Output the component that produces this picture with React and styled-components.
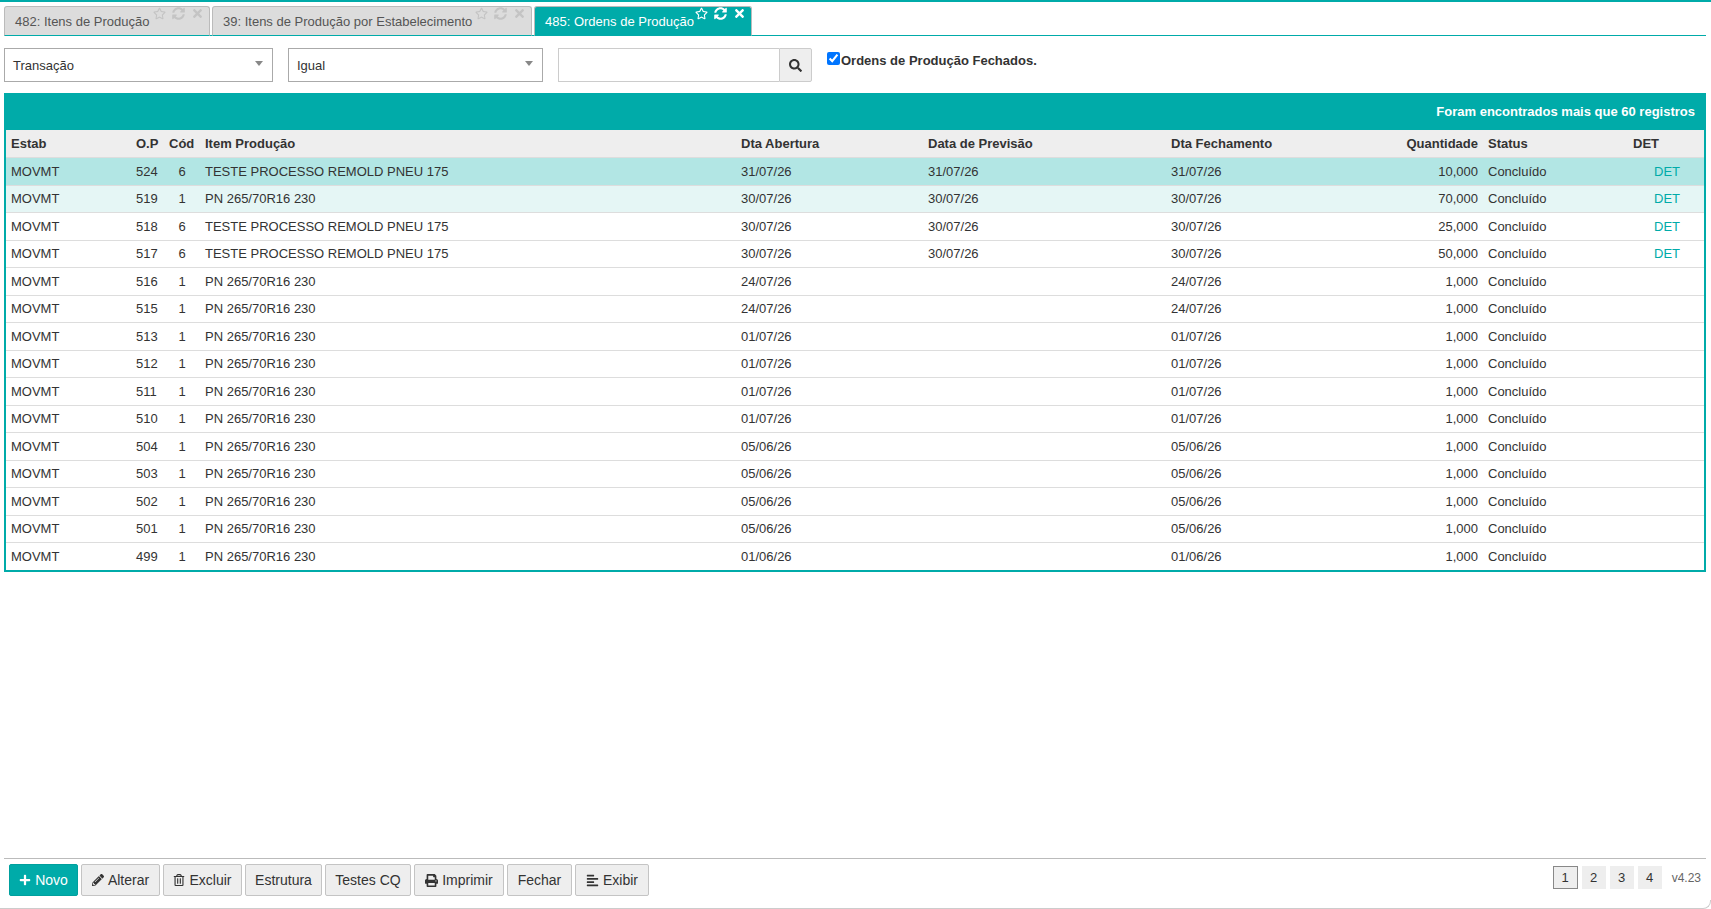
import React from "react"
import styled, { createGlobalStyle } from "styled-components"
import {
  FaRegStar,
  FaSyncAlt,
  FaTimes,
  FaSearch,
  FaPlus,
  FaPencilAlt,
  FaRegTrashAlt,
  FaPrint,
  FaAlignLeft,
} from "react-icons/fa"

const TEAL = "#00aba9"

const GlobalStyle = createGlobalStyle`
  html, body {
    margin: 0;
    padding: 0;
    background: #fff;
  }
  body {
    font-family: "Liberation Sans", Arial, sans-serif;
    font-size: 13px;
    color: #333;
  }
`

const Page = styled.div`
  position: relative;
  display: flex;
  flex-direction: column;
  height: 909px;
  box-sizing: border-box;
  border-top: 2px solid ${TEAL};
  overflow: hidden;

  /* small highlight sitting on the top bar */
  &::before {
    content: "";
    position: absolute;
    top: -2px;
    left: 1675px;
    width: 20px;
    height: 2px;
    background: linear-gradient(90deg, transparent, #fff 50%, transparent);
  }
`

const TabBar = styled.div`
  display: flex;
  align-items: flex-end;
  gap: 2px;
  height: 34px;
  margin: 0 5px 0 4px;
  padding-top: 3px;
  box-sizing: border-box;
  border-bottom: 1px solid ${TEAL};
`

const Tab = styled.div`
  position: relative;
  display: flex;
  align-items: center;
  box-sizing: border-box;
  width: ${(p) => p.$width}px;
  height: 30px;
  margin-bottom: -1px;
  padding: 0 0 0 10px;
  background: ${(p) => (p.$active ? TEAL : "#dcdcdc")};
  color: ${(p) => (p.$active ? "#fff" : "#555")};
  border: 1px solid #bbb;
  border-bottom-color: ${TEAL};
  border-radius: 3px 3px 0 0;
  font-size: 13px;
`

const TabIcons = styled.div`
  position: absolute;
  top: 0;
  right: 5px;
  display: flex;
  align-items: center;
  gap: 6px;
  font-size: 13px;
  color: ${(p) => (p.$active ? "#fff" : "#c4c4c4")};
`

const Filters = styled.div`
  display: flex;
  align-items: flex-start;
  height: 45px;
  padding: 12px 0 0 4px;
`

const SelectBox = styled.div`
  position: relative;
  display: flex;
  align-items: center;
  box-sizing: border-box;
  width: ${(p) => p.$width}px;
  height: 34px;
  margin-right: 15px;
  padding-left: 8px;
  background: #fff;
  border: 1px solid #aaa;
  font-size: 13px;

  &::after {
    content: "";
    position: absolute;
    right: 9px;
    top: 12px;
    border-left: 4px solid transparent;
    border-right: 4px solid transparent;
    border-top: 5px solid #888;
  }
`

const SearchInput = styled.input`
  box-sizing: border-box;
  width: 221px;
  height: 34px;
  padding: 0 6px;
  border: 1px solid #ccc;
  border-right: none;
  outline: none;
`

const SearchButton = styled.button`
  display: flex;
  align-items: center;
  justify-content: center;
  box-sizing: border-box;
  width: 33px;
  height: 34px;
  padding: 0;
  background: #eee;
  border: 1px solid #ccc;
  border-radius: 0 2px 2px 0;
  color: #333;
  font-size: 13px;
`

const CheckLabel = styled.label`
  display: flex;
  align-items: center;
  height: 14px;
  margin: 5px 0 0 15px;
  font-size: 13px;
  font-weight: bold;
  color: #333;
`

const CheckInput = styled.input`
  width: 13px;
  height: 13px;
  margin: -3px 1px 0 0;
  accent-color: #0075ff;
`

const Panel = styled.div`
  margin: 0 5px 0 4px;
  border: 2px solid ${TEAL};
  border-top: none;
`

const PanelHead = styled.div`
  display: flex;
  align-items: center;
  justify-content: flex-end;
  height: 37px;
  margin: 0 -2px;
  padding-right: 11px;
  background: ${TEAL};
  color: #fff;
  font-size: 13px;
  font-weight: bold;
`

const Table = styled.table`
  width: 100%;
  border-collapse: collapse;
  table-layout: fixed;
`

const HeadCell = styled.th`
  height: 27px;
  padding: 0 5px;
  background: #eee;
  border-bottom: 1px solid #ddd;
  font-weight: bold;
  font-size: 13px;
  color: #333;
  text-align: ${(p) => p.$align || "left"};
`

const Row = styled.tr`
  background: ${(p) =>
    p.$state === "selected" ? "#b2e6e4" : p.$state === "hover" ? "#e5f6f5" : "#fff"};
`

const Cell = styled.td`
  height: 26.5px;
  padding: 0 5px;
  border-bottom: 1px solid #ddd;
  font-size: 13px;
  color: #333;
  white-space: nowrap;
  text-align: ${(p) => p.$align || "left"};

  tr:last-child > & {
    border-bottom: none;
  }
`

const DetLink = styled.a`
  display: inline-block;
  margin-right: 19px;
  color: ${TEAL};
  text-decoration: none;
`

const Footer = styled.div`
  display: flex;
  align-items: flex-start;
  justify-content: space-between;
  margin: auto 5px 0 4px;
  height: 50px;
  padding: 5px 5px 0 5px;
  box-sizing: border-box;
  border-top: 1px solid #bbb;
`

const BottomEdge = styled.div`
  height: 9px;
  margin-top: -8px;
  box-sizing: border-box;
  border-bottom: 1px solid #ccc;
  border-right: 1px solid #ccc;
  border-bottom-right-radius: 8px;
`

const Buttons = styled.div`
  display: flex;
  gap: 3px;
`

const Button = styled.button`
  display: flex;
  align-items: center;
  justify-content: center;
  gap: 4px;
  box-sizing: border-box;
  width: ${(p) => p.$width}px;
  height: 32px;
  padding: 0;
  background: ${(p) => (p.$primary ? TEAL : "#eee")};
  color: ${(p) => (p.$primary ? "#fff" : "#333")};
  border: 1px solid ${(p) => (p.$primary ? "#00a09e" : "#c4c4c4")};
  border-radius: 2px;
  font-family: "Liberation Sans", Arial, sans-serif;
  font-size: 14px;
`

const Pager = styled.div`
  display: flex;
  align-items: center;
  gap: 4px;
  padding-top: 2px;
`

const PageNumber = styled.div`
  display: flex;
  align-items: center;
  justify-content: center;
  box-sizing: border-box;
  width: ${(p) => (p.$active ? 25 : 24)}px;
  height: 23px;
  background: #eee;
  border: ${(p) => (p.$active ? "1px solid #888" : "none")};
  font-size: 13px;
  color: #333;
`

const Version = styled.span`
  margin-left: 6px;
  font-size: 12px;
  color: #666;
`

const COLUMNS = [
  { label: "Estab", width: 125 },
  { label: "O.P", width: 33 },
  { label: "Cód", width: 36 },
  { label: "Item Produção", width: 536 },
  { label: "Dta Abertura", width: 187 },
  { label: "Data de Previsão", width: 243 },
  { label: "Dta Fechamento", width: 195 },
  { label: "Quantidade", width: 122, align: "right" },
  { label: "Status", width: 145 },
  { label: "DET", width: 76 },
]

const TESTE = "TESTE PROCESSO REMOLD PNEU 175"
const PN = "PN 265/70R16 230"

const ROWS = [
  ["524", "6", TESTE, "31/07/26", "31/07/26", "31/07/26", "10,000", true, "selected"],
  ["519", "1", PN, "30/07/26", "30/07/26", "30/07/26", "70,000", true, "hover"],
  ["518", "6", TESTE, "30/07/26", "30/07/26", "30/07/26", "25,000", true],
  ["517", "6", TESTE, "30/07/26", "30/07/26", "30/07/26", "50,000", true],
  ["516", "1", PN, "24/07/26", "", "24/07/26", "1,000"],
  ["515", "1", PN, "24/07/26", "", "24/07/26", "1,000"],
  ["513", "1", PN, "01/07/26", "", "01/07/26", "1,000"],
  ["512", "1", PN, "01/07/26", "", "01/07/26", "1,000"],
  ["511", "1", PN, "01/07/26", "", "01/07/26", "1,000"],
  ["510", "1", PN, "01/07/26", "", "01/07/26", "1,000"],
  ["504", "1", PN, "05/06/26", "", "05/06/26", "1,000"],
  ["503", "1", PN, "05/06/26", "", "05/06/26", "1,000"],
  ["502", "1", PN, "05/06/26", "", "05/06/26", "1,000"],
  ["501", "1", PN, "05/06/26", "", "05/06/26", "1,000"],
  ["499", "1", PN, "01/06/26", "", "01/06/26", "1,000"],
]

const TABS = [
  { label: "482: Itens de Produção", width: 206 },
  { label: "39: Itens de Produção por Estabelecimento", width: 320 },
  { label: "485: Ordens de Produção", width: 218, active: true },
]

const App = () => (
  <Page>
    <GlobalStyle />
    <TabBar>
      {TABS.map((tab) => (
        <Tab key={tab.label} $width={tab.width} $active={tab.active}>
          {tab.label}
          <TabIcons $active={tab.active}>
            <FaRegStar />
            <FaSyncAlt />
            <FaTimes />
          </TabIcons>
        </Tab>
      ))}
    </TabBar>

    <Filters>
      <SelectBox $width={269}>Transação</SelectBox>
      <SelectBox $width={255}>Igual</SelectBox>
      <SearchInput />
      <SearchButton>
        <FaSearch />
      </SearchButton>
      <CheckLabel>
        <CheckInput type="checkbox" defaultChecked />
        Ordens de Produção Fechados.
      </CheckLabel>
    </Filters>

    <Panel>
      <PanelHead>Foram encontrados mais que 60 registros</PanelHead>
      <Table>
        <colgroup>
          {COLUMNS.map((col) => (
            <col key={col.label} style={{ width: col.width }} />
          ))}
        </colgroup>
        <thead>
          <tr>
            {COLUMNS.map((col) => (
              <HeadCell key={col.label} $align={col.align}>
                {col.label}
              </HeadCell>
            ))}
          </tr>
        </thead>
        <tbody>
          {ROWS.map(([op, cod, item, open, due, closed, qty, det, state]) => (
            <Row key={op} $state={state}>
              <Cell>MOVMT</Cell>
              <Cell>{op}</Cell>
              <Cell $align="center">{cod}</Cell>
              <Cell>{item}</Cell>
              <Cell>{open}</Cell>
              <Cell>{due}</Cell>
              <Cell>{closed}</Cell>
              <Cell $align="right">{qty}</Cell>
              <Cell>Concluído</Cell>
              <Cell $align="right">{det && <DetLink href="#">DET</DetLink>}</Cell>
            </Row>
          ))}
        </tbody>
      </Table>
    </Panel>

    <Footer>
      <Buttons>
        <Button $primary $width={69}>
          <FaPlus size={12} />
          Novo
        </Button>
        <Button $width={79}>
          <FaPencilAlt size={12} />
          Alterar
        </Button>
        <Button $width={79}>
          <FaRegTrashAlt size={12} />
          Excluir
        </Button>
        <Button $width={77}>Estrutura</Button>
        <Button $width={86}>Testes CQ</Button>
        <Button $width={90}>
          <FaPrint size={13} />
          Imprimir
        </Button>
        <Button $width={65}>Fechar</Button>
        <Button $width={74}>
          <FaAlignLeft size={13} />
          Exibir
        </Button>
      </Buttons>
      <Pager>
        <PageNumber $active>1</PageNumber>
        <PageNumber>2</PageNumber>
        <PageNumber>3</PageNumber>
        <PageNumber>4</PageNumber>
        <Version>v4.23</Version>
      </Pager>
    </Footer>
    <BottomEdge />
  </Page>
)

export default App
